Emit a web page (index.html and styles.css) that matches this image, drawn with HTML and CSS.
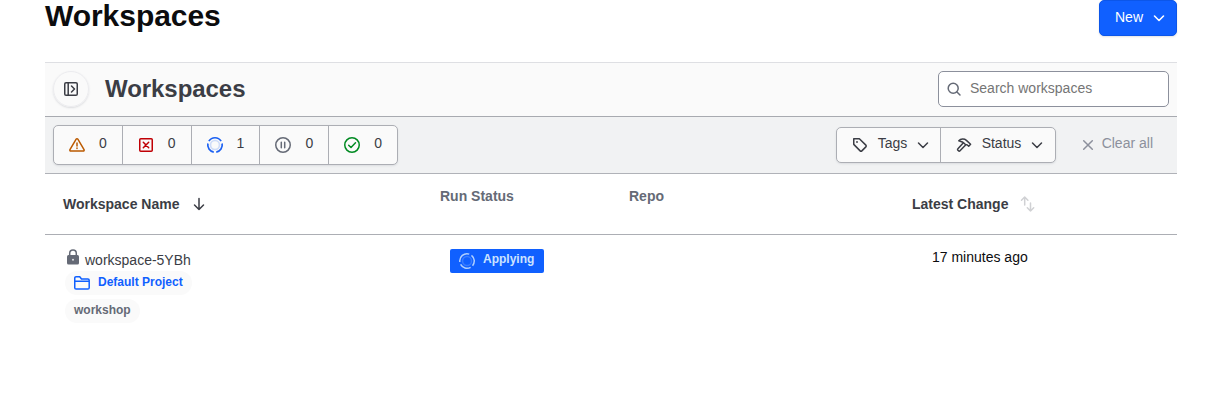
FILE: index.html
```
<!DOCTYPE html>
<html lang="en">
<head>
<meta charset="utf-8">
<title>Workspaces</title>
<link rel="stylesheet" href="styles.css">
</head>
<body>
<main class="page">
  <header class="page-head">
    <h1 class="page-title">Workspaces</h1>
    <button class="new-btn"><span>New</span>
      <svg class="icon" viewBox="0 0 16 16"><path d="M3.500 6l4.500 4.500L12.500 6" stroke-width="1.600"/></svg>
    </button>
  </header>

  <section class="panel-head">
    <button class="toggle" aria-label="Toggle sidebar">
      <svg class="icon" viewBox="0 0 16 16"><rect x="1.750" y="1.750" width="12.500" height="12.500" rx="1.300"/><path d="M5.200 2v12M8.500 5l3 3-3 3"/></svg>
    </button>
    <h2 class="panel-title">Workspaces</h2>
    <label class="search">
      <svg class="icon" viewBox="0 0 16 16"><circle cx="7.200" cy="7.200" r="5"/><path d="M11 11l3 3"/></svg>
      <input type="text" placeholder="Search workspaces">
    </label>
  </section>

  <section class="toolbar">
    <div class="counts">
      <button class="count"><svg class="icon warn" viewBox="0 0 16 16"><path d="M7.150 2.200a1 1 0 0 1 1.700 0l6.200 10.400a1 1 0 0 1-.85 1.500H1.800a1 1 0 0 1-.85-1.500zM8 6v3M8 11v.6"/></svg><span>0</span></button>
      <button class="count"><svg class="icon error" viewBox="0 0 16 16"><rect x="1.750" y="1.750" width="12.500" height="12.500" rx="1"/><path d="M5.300 5.300l5.400 5.400M10.700 5.300l-5.400 5.400"/></svg><span>0</span></button>
      <button class="count"><svg class="icon running" viewBox="0 0 16 16"><circle cx="8" cy="8" r="4.500" opacity=".2"/><path d="M1.850 4.160A7.250 7.250 0 0 1 14.150 4.160M15.100 6.500A7.250 7.250 0 0 1 9.260 15.140M6.740 15.140A7.250 7.250 0 0 1 .9 6.500"/></svg><span>1</span></button>
      <button class="count"><svg class="icon hold" viewBox="0 0 16 16"><circle cx="8" cy="8" r="7.250"/><path d="M6.300 5.300v5.400M9.700 5.300v5.400"/></svg><span>0</span></button>
      <button class="count"><svg class="icon ok" viewBox="0 0 16 16"><circle cx="8" cy="8" r="7.250"/><path d="M4.700 8.300l2.300 2.200 4.500-4.700"/></svg><span>0</span></button>
    </div>
    <div class="filters">
      <button class="filter tags"><svg class="icon" viewBox="0 0 16 16"><path d="M1.750 1.750h5.600l6.500 6.400a1.200 1.200 0 0 1 0 1.700l-4 4a1.200 1.200 0 0 1-1.700 0l-6.400-6.500z"/><circle class="dot" cx="5" cy="5" r=".9"/></svg><span>Tags</span><svg class="icon chevron" viewBox="0 0 16 16"><path d="M3.500 6L8 10.500 12.500 6"/></svg></button>
      <button class="filter"><svg class="icon" viewBox="0 0 16 16"><path d="M2.800 3.800C4.800 1.700 8.200 1.500 10.400 3.400L14.600 7.200l-1.900 2-1.700-1.500-1.300.1L7.300 5.500C6 4.400 4.400 4.600 2.800 3.800zM7.400 5.700l-5.500 6a1 1 0 0 0 0 1.500l.6.600a1 1 0 0 0 1.500 0l5.600-5.900"/></svg><span>Status</span><svg class="icon chevron" viewBox="0 0 16 16"><path d="M3.500 6L8 10.500 12.500 6"/></svg></button>
    </div>
    <button class="clear"><svg class="icon" viewBox="0 0 16 16"><path d="M3.700 3.700l8.600 8.600M12.300 3.700l-8.600 8.600"/></svg><span>Clear all</span></button>
  </section>

  <section class="table">
    <div class="row row-head">
      <div class="cell sortable first">Workspace Name <svg class="icon" viewBox="0 0 16 16"><path d="M8 2.500v11M3.500 9L8 13.500 12.500 9"/></svg></div>
      <div class="cell plain">Run Status</div>
      <div class="cell plain">Repo</div>
      <div class="cell sortable">Latest Change <svg class="icon unsorted" viewBox="0 0 16 16"><path d="M4.700 9V1M1.500 4.200L4.700 1l3.200 3.200M10.500 7v8M7.300 11.800l3.200 3.200 3.200-3.200"/></svg></div>
    </div>
    <div class="row row-body">
      <div class="cell name-cell">
        <div class="ws-name"><svg class="lock" viewBox="0 0 14 16"><path class="shackle" d="M3.700 7V4.400a3.300 3.300 0 0 1 6.600 0V7"/><rect x="1" y="6" width="12" height="9.500" rx="1.500"/><circle cx="7" cy="10.800" r="1"/></svg><span>workspace-5YBh</span></div>
        <div class="project"><svg class="icon" viewBox="0 0 16 16"><path d="M.75 12.700V3a1.300 1.300 0 0 1 1.300-1.300h3.700L7.500 4h6.400a1.300 1.300 0 0 1 1.300 1.300v7.400a1.300 1.300 0 0 1-1.300 1.300H2.050a1.300 1.300 0 0 1-1.300-1.300zM.75 6.300h14.500"/></svg><span>Default Project</span></div>
        <div class="tag">workshop</div>
      </div>
      <div class="cell status-cell"><div class="badge"><svg class="icon" viewBox="0 0 16 16"><circle class="core" cx="8" cy="8" r="4.500"/><path transform="rotate(-40 8 8)" d="M1.850 4.160A7.250 7.250 0 0 1 14.150 4.160M15.100 6.500A7.250 7.250 0 0 1 9.260 15.140M6.740 15.140A7.250 7.250 0 0 1 .9 6.500"/></svg><span>Applying</span></div></div>
      <div class="cell"></div>
      <div class="cell changed">17 minutes ago</div>
    </div>
  </section>
</main>
</body>
</html>
```

FILE: styles.css
```
* { box-sizing: border-box; }

body {
  margin: 0;
  background: #fff;
  color: #3b3d45;
  font: 14px/20px "Liberation Sans", Arial, sans-serif;
}

h1, h2 { margin: 0; }

button {
  margin: 0;
  padding: 0;
  border: 0;
  background: none;
  color: inherit;
  font: inherit;
}

.icon {
  width: 16px;
  height: 16px;
  flex: none;
  fill: none;
  stroke: currentColor;
  stroke-width: 1.5;
  stroke-linecap: round;
  stroke-linejoin: round;
  overflow: visible;
}

.page { width: 1132px; margin-left: 45px; }

.page-head {
  display: flex;
  justify-content: space-between;
  align-items: flex-start;
  height: 62px;
}

.page-title {
  color: #0c0c0e;
  font-size: 30px;
  letter-spacing: -.05px;
  line-height: 32px;
}

.new-btn {
  display: flex;
  align-items: center;
  gap: 8px;
  width: 78px;
  height: 36px;
  padding-left: 15px;
  border: 1px solid #0c56e9;
  border-radius: 5px;
  background: #1060ff;
  color: #fff;
  box-shadow: 0 1px 2px rgba(101, 106, 118, .2);
}
.new-btn span { padding-bottom: 2px; }

.panel-head {
  display: flex;
  align-items: center;
  height: 55px;
  padding: 0 8px 1px;
  border-top: 1px solid #dedfe3;
  border-bottom: 1px solid #a8aab0;
  background: #fafafa;
}

.toggle {
  display: grid;
  place-items: center;
  width: 36px;
  height: 36px;
  border: 1px solid #ececef;
  border-radius: 50%;
  box-shadow: 0 1px 2px rgba(101, 106, 118, .2);
}

.panel-title {
  margin-left: 16px;
  font-size: 24px;
  letter-spacing: -.05px;
  line-height: 28px;
}

.search {
  display: flex;
  align-items: center;
  gap: 8px;
  width: 231px;
  height: 36px;
  margin-left: auto;
  padding-left: 7px;
  border: 1px solid #8c909c;
  border-radius: 5px;
  background: #fff;
  color: #656a76;
}
.search input {
  width: 180px;
  padding: 0 0 2px;
  border: 0;
  outline: 0;
  background: none;
  font: inherit;
}
.search input::placeholder { color: #757575; }

.toolbar {
  display: flex;
  align-items: center;
  height: 57px;
  padding: 0 24px 0 8px;
  border-bottom: 1px solid #b0b2b8;
  background: #f1f2f3;
}

.counts, .filters {
  display: flex;
  border: 1px solid #acaeb4;
  border-radius: 5px;
  background: #fafafa;
  box-shadow: 0 1px 2px rgba(101, 106, 118, .15);
}
.counts { width: 345px; height: 40px; }

.count {
  display: flex;
  align-items: center;
  gap: 14px;
  flex: 1;
  padding-left: 15px;
}
.count + .count, .filter + .filter { border-left: 1px solid #acaeb4; }
.count span, .filter span, .clear span { padding-bottom: 4px; }

.warn { color: #bb5a00; }
.error { color: #c00005; }
.running { color: #1c61f2; stroke-linecap: butt; stroke-width: 1.7; }
.hold { color: #656a76; }
.ok { color: #008a22; }

.filters {
  width: 220px;
  height: 36px;
  margin-left: auto;
}
.filter {
  display: flex;
  align-items: center;
  flex: 1;
  padding-left: 15px;
}
.filter.tags { flex: 0 0 103px; }
.filter span { margin-left: 10px; }
.filter .chevron { margin-left: 8px; }
.dot { fill: currentColor; stroke: none; }

.clear {
  display: flex;
  align-items: center;
  gap: 6px;
  margin-left: 24px;
  color: #8c909c;
}

.row {
  display: grid;
  grid-template-columns: 377px 189px 283px 1fr;
}
.row-head {
  height: 61px;
  border-bottom: 1px solid #acaeb4;
  font-weight: bold;
}
.row-head .cell { padding-left: 18px; }
.sortable {
  display: flex;
  align-items: center;
  gap: 12px;
}
.unsorted {
  color: #d0d1d4;
  stroke-width: 1.5;
}
.row-head .plain {
  padding-top: 12px;
  color: #656a76;
}

.row-body { padding-top: 14px; }
.name-cell {
  display: flex;
  flex-direction: column;
  align-items: flex-start;
  padding-left: 20px;
}
.ws-name {
  display: flex;
  gap: 5px;
  height: 22px;
}
.ws-name span { padding-top: 1px; }
.lock {
  width: 14px;
  height: 16px;
  margin: -.5px 0 0 1px;
  fill: #656a76;
}
.shackle {
  fill: none;
  stroke: #656a76;
  stroke-width: 1.5;
}
.lock circle { fill: #dedfe3; }

.project, .tag {
  display: flex;
  border-radius: 12px;
  background: #fafafa;
  font-size: 12px;
  font-weight: bold;
  height: 24px;
  line-height: 22px;
}
.project {
  align-items: center;
  gap: 8px;
  padding: 0 9px;
  color: #1060ff;
}
.project span { padding-bottom: 2px; }
.tag {
  margin-top: 4px;
  padding: 0 9px;
  color: #656a76;
}

.status-cell { padding-left: 28px; }
.badge {
  display: flex;
  align-items: center;
  gap: 8px;
  width: 94px;
  height: 24px;
  padding-left: 9px;
  border-radius: 2px;
  background: #1060ff;
  color: #cce3fe;
  font-size: 12px;
  font-weight: bold;
}
.badge span { padding-bottom: 4px; }
.badge .icon { stroke-linecap: butt; opacity: .85; }
.core { opacity: .25; }

.changed {
  padding-left: 38px;
  color: #0c0c0e;
  line-height: 16px;
}
```
